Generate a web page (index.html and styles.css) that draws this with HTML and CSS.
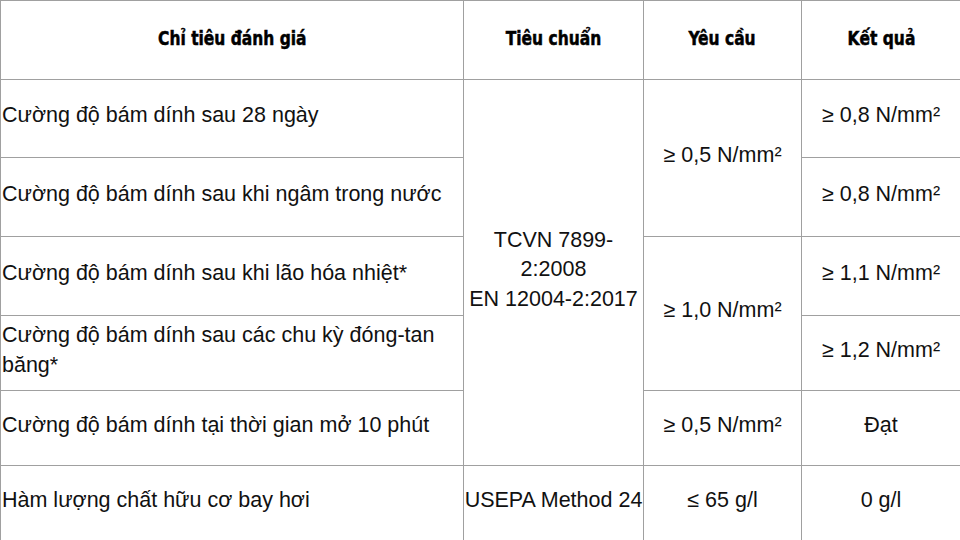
FILE: index.html
```html
<!DOCTYPE html>
<html lang="vi">
<head>
<meta charset="utf-8">
<link rel="stylesheet" href="styles.css">
</head>
<body>
<table class="spec">
  <colgroup>
    <col class="c1"><col class="c2"><col class="c3"><col class="c4">
  </colgroup>
  <thead>
    <tr class="r-head">
      <th><span class="hd">Chỉ tiêu đánh giá</span></th>
      <th><span class="hd">Tiêu chuẩn</span></th>
      <th><span class="hd">Yêu cầu</span></th>
      <th><span class="hd">Kết quả</span></th>
    </tr>
  </thead>
  <tbody>
    <tr class="r1">
      <td class="name">Cường độ bám dính sau 28 ngày</td>
      <td class="std" rowspan="5">TCVN 7899-<br>2:2008<br>EN 12004-2:2017</td>
      <td rowspan="2">≥ 0,5 N/mm²</td>
      <td>≥ 0,8 N/mm²</td>
    </tr>
    <tr class="r2">
      <td class="name">Cường độ bám dính sau khi ngâm trong nước</td>
      <td>≥ 0,8 N/mm²</td>
    </tr>
    <tr class="r3">
      <td class="name">Cường độ bám dính sau khi lão hóa nhiệt*</td>
      <td rowspan="2">≥ 1,0 N/mm²</td>
      <td>≥ 1,1 N/mm²</td>
    </tr>
    <tr class="r4">
      <td class="name">Cường độ bám dính sau các chu kỳ đóng-tan băng*</td>
      <td>≥ 1,2 N/mm²</td>
    </tr>
    <tr class="r5">
      <td class="name">Cường độ bám dính tại thời gian mở 10 phút</td>
      <td>≥ 0,5 N/mm²</td>
      <td>Đạt</td>
    </tr>
    <tr class="r6">
      <td class="name">Hàm lượng chất hữu cơ bay hơi</td>
      <td>USEPA Method 24</td>
      <td>≤ 65 g/l</td>
      <td>0 g/l</td>
    </tr>
  </tbody>
</table>
</body>
</html>
```

FILE: styles.css
```css
html, body {
  margin: 0;
  padding: 0;
  background: #ffffff;
}
body {
  width: 960px;
  height: 540px;
  overflow: hidden;
}
.spec {
  width: 960px;
  height: 540px;
  border-collapse: collapse;
  table-layout: fixed;
  font-family: "Liberation Sans", Arial, sans-serif;
  font-size: 21.5px;
  color: #111;
}
.c1 { width: 463px; }
.c2 { width: 180px; }
.c3 { width: 158px; }
.c4 { width: 159px; }
.spec th, .spec td {
  border: 1px solid #a0a0a0;
  padding: 0 0 5px 0;
  text-align: center;
  vertical-align: middle;
  line-height: 29.5px;
}
.spec th {
  padding: 0 0 2px 0;
  font-family: "DejaVu Sans Condensed", "DejaVu Sans", sans-serif;
  font-stretch: condensed;
  font-weight: 700;
  font-size: 20px;
  color: #000;
}
.hd {
  display: inline-block;
  transform: scaleX(0.86);
  -webkit-text-stroke: 0.5px #000;
  white-space: nowrap;
}
.spec td.name {
  text-align: left;
  padding-left: 1px;
}
.r-head { height: 79px; }
.r1 { height: 78px; }
.r2 { height: 79px; }
.r3 { height: 79px; }
.r4 { height: 75px; }
.r5 { height: 75px; }
.r6 { height: 75px; }
```
